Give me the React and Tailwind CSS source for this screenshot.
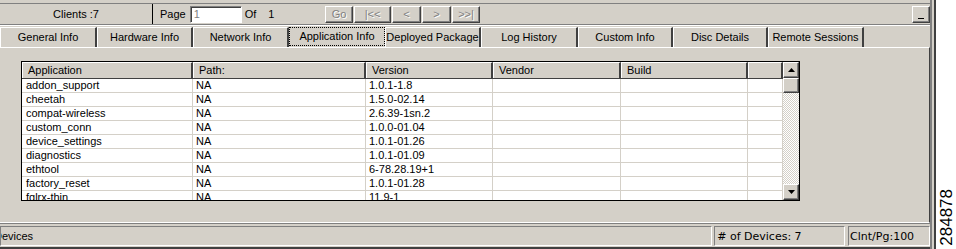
import React from 'react';

const raised =
  'border border-t-white border-l-white border-r-[#404040] border-b-[#404040] shadow-[inset_-1px_-1px_0_#808080]';
const sunken =
  'border border-t-[#808080] border-l-[#808080] border-r-white border-b-white';

const tabs = [
  ['General Info', 97],
  ['Hardware Info', 96],
  ['Network Info', 96],
  ['Application Info', 96],
  ['Deployed Package', 96],
  ['Log History', 97],
  ['Custom Info', 95],
  ['Disc Details', 95],
  ['Remote Sessions', 96],
];

const rows = [
  ['addon_support', 'NA', '1.0.1-1.8'],
  ['cheetah', 'NA', '1.5.0-02.14'],
  ['compat-wireless', 'NA', '2.6.39-1sn.2'],
  ['custom_conn', 'NA', '1.0.0-01.04'],
  ['device_settings', 'NA', '1.0.1-01.26'],
  ['diagnostics', 'NA', '1.0.1-01.09'],
  ['ethtool', 'NA', '6-78.28.19+1'],
  ['factory_reset', 'NA', '1.0.1-01.28'],
  ['fglrx-thin', 'NA', '11.9-1'],
];

const columns = [
  ['Application', 171],
  ['Path:', 173],
  ['Version', 127],
  ['Vendor', 128],
  ['Build', 127],
  ['', 35],
];

function NavButton({ label, width }) {
  return (
    <div
      className={`${raised} h-[17px] flex items-center justify-center text-[#808080] [text-shadow:1px_1px_0_#ffffff]`}
      style={{ width }}
    >
      {label}
    </div>
  );
}

function Arrow({ up }) {
  return (
    <svg width="7" height="4" viewBox="0 0 7 4">
      <polygon points={up ? '3.5,0 7,4 0,4' : '0,0 7,0 3.5,4'} fill="#000" />
    </svg>
  );
}

export default function App() {
  return (
    <div className="w-[956px] h-[249px] flex bg-white overflow-hidden font-['Liberation_Sans',Arial,sans-serif] text-[11px] leading-[13px] text-black">
      {/* window */}
      <div className="w-[930px] h-full bg-[#d4d0c8] flex flex-col">
        {/* toolbar */}
        <div className="h-[26px] pt-[3px] border-b border-white">
          <div className="h-[22px] flex items-center border-t border-[#808080] border-b border-b-[#808080]">
            <div className="w-[153px] h-full flex items-center justify-center border-r border-black">
              Clients :7
            </div>
            <div className="w-[172px] flex items-center pl-[7px]">
              <span>Page</span>
              <div className={`${sunken} shadow-[inset_1px_1px_0_#404040] ml-[4px] w-[52px] h-[17px] bg-white pl-[3px] flex items-center text-[#808080]`}>
                1
              </div>
              <span className="ml-[3px]">Of</span>
              <span className="ml-[12px]">1</span>
            </div>
            <div className="flex gap-[1px]">
              <NavButton label="Go" width={28} />
              <NavButton label="|<<" width={37} />
              <NavButton label="<" width={29} />
              <NavButton label=">" width={29} />
              <NavButton label=">>|" width={28} />
            </div>
            <div className="flex-1" />
            <div className={`${raised} w-[18px] h-[17px] flex items-end justify-center pb-[3px]`}>
              <div className="w-[6px] h-[1px] bg-black" />
            </div>
          </div>
        </div>

        {/* tabs */}
        <div className="h-[21px] flex items-end">
          {tabs.map(([name, w], i) =>
            i === 3 ? (
              <div
                key={name}
                className="h-[19px] mb-[1px] flex items-center justify-center border border-dotted border-black whitespace-nowrap"
                style={{ width: w }}
              >
                {name}
              </div>
            ) : (
              <div
                key={name}
                className="h-[20px] flex items-center justify-center border-t border-l border-white border-r-2 border-r-[#404040] whitespace-nowrap"
                style={{ width: w }}
              >
                {name}
              </div>
            )
          )}
        </div>

        {/* content panel */}
        <div className="flex-1 border-t border-white border-r border-r-[#404040] border-b border-b-white pl-[21px] pt-[13px]">
          <div className="w-[779px] h-[140px] border border-black flex bg-white">
            <div className="w-[761px] flex flex-col overflow-hidden">
              <div className="flex h-[17px] shrink-0 bg-[#d4d0c8] border-b border-[#404040]">
                {columns.map(([name, w]) => (
                  <div
                    key={name + w}
                    className="h-full flex items-center pl-[5px] border-t border-l border-white border-r-2 border-r-[#404040]"
                    style={{ width: w }}
                  >
                    {name}
                  </div>
                ))}
              </div>
              {rows.map((r) => (
                <div key={r[0]} className="flex h-[14px] shrink-0 border-b border-[#d4d0c8]">
                  {columns.map(([name, w], j) => (
                    <div
                      key={name + w}
                      className={`h-full flex items-center border-r border-[#d4d0c8] ${j === 0 ? 'pl-[4px]' : 'pl-[3px]'}`}
                      style={{ width: w }}
                    >
                      {r[j] || ''}
                    </div>
                  ))}
                </div>
              ))}
            </div>
            {/* scrollbar */}
            <div className="w-[16px] flex flex-col bg-[repeating-conic-gradient(#d4d0c8_0_25%,#ffffff_0_50%)] bg-[length:2px_2px]">
              <div className={`${raised} h-[16px] bg-[#d4d0c8] flex items-center justify-center`}>
                <Arrow up />
              </div>
              <div className={`${raised} h-[15px] bg-[#d4d0c8]`} />
              <div className="flex-1" />
              <div className={`${raised} h-[16px] bg-[#d4d0c8] flex items-center justify-center`}>
                <Arrow />
              </div>
            </div>
          </div>
        </div>

        {/* status bar */}
        <div className="h-[26px] border-t border-[#808080] flex items-start pt-[2px] border-b-2 border-b-[#404040]">
          <div className={`${sunken} w-[713px] h-[20px] flex items-center overflow-hidden`}>
            <span className="ml-[-7px]">Devices</span>
          </div>
          <div className={`${sunken} ml-[2px] w-[131px] h-[20px] flex items-center pl-[2px] font-['DejaVu_Sans',sans-serif] text-[11px]`}>
            # of Devices: 7
          </div>
          <div className={`${sunken} ml-[3px] w-[82px] h-[20px] flex items-center pl-[1px] font-['DejaVu_Sans',sans-serif] text-[11px]`}>
            Clnt/Pg:100
          </div>
        </div>
      </div>

      {/* window frame */}
      <div className="w-[6px] h-full bg-[#d4d0c8] border-l-2 border-[#808080] border-r-2 border-r-[#404040]" />

      {/* side label */}
      <div className="flex-1 flex items-end justify-center pb-[3px]">
        <span className="[writing-mode:vertical-rl] rotate-180 text-[17px] leading-[17px] font-['Liberation_Sans',Arial,sans-serif]">
          284878
        </span>
      </div>
    </div>
  );
}
